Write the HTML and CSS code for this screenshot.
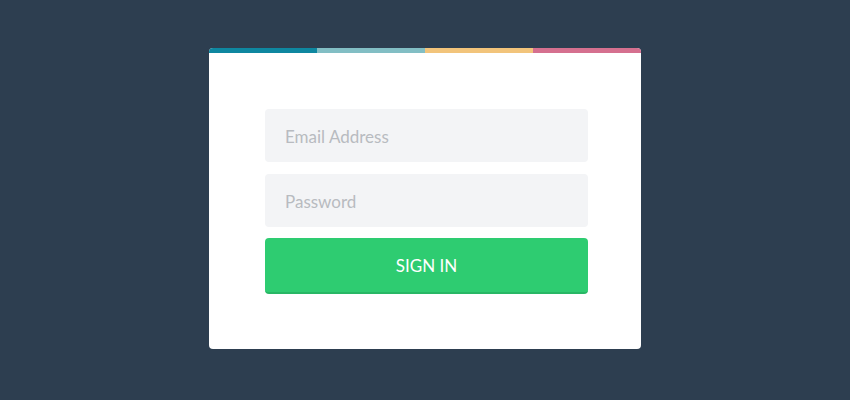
FILE: index.html
```html
<!DOCTYPE html>
<html>
<head>
<meta charset="utf-8">
<link rel="stylesheet" href="styles.css">
</head>
<body>
<div class="card">
  <div class="stripe">
    <span class="s1"></span><span class="s2"></span><span class="s3"></span><span class="s4"></span>
  </div>
  <form class="form">
    <input class="field" type="text" placeholder="Email Address">
    <input class="field last" type="password" placeholder="Password">
    <button class="btn" type="button">Sign In</button>
  </form>
</div>
</body>
</html>
```
FILE: styles.css
```css
html, body {
  margin: 0;
  padding: 0;
  background: #2d3e50;
  height: 100%;
}
body {
  font-family: "Lato", "Open Sans", sans-serif;
}
.card {
  width: 432px;
  margin: 48px auto 0;
  background: #fff;
  border-radius: 4px;
  overflow: hidden;
}
.stripe {
  display: flex;
  height: 5px;
}
.stripe span { flex: 1; }
.s1 { background: #0e87a0; }
.s2 { background: #82bec4; }
.s3 { background: #f2c47b; }
.s4 { background: #d5708f; }
.form {
  display: flex;
  flex-direction: column;
  padding: 56px 53px 55px 56px;
}
.field {
  box-sizing: border-box;
  height: 53px;
  border: none;
  border-radius: 4px;
  background: #f3f4f6;
  padding: 2px 20px 0;
  font-family: inherit;
  font-size: 17px;
  color: #555;
  margin-bottom: 12px;
  outline: none;
}
.field.last { margin-bottom: 11px; }
.field::placeholder { color: #b8bbc0; }
.btn {
  box-sizing: border-box;
  height: 56px;
  border: none;
  border-bottom: 2px solid #28b765;
  border-radius: 4px;
  background: #2ecc71;
  color: #fff;
  font-family: inherit;
  font-size: 17px;
  text-transform: uppercase;
  cursor: pointer;
}
```
